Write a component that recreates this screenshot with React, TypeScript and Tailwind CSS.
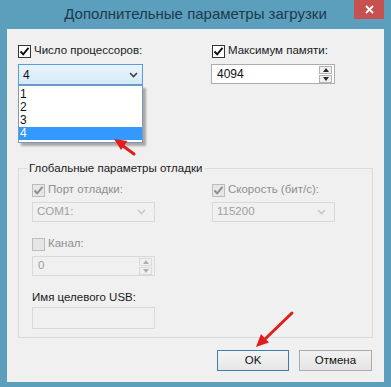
import React from "react";

const font = { fontFamily: '"Liberation Sans", Arial, sans-serif' };

function CheckBox({ checked, disabled }: { checked?: boolean; disabled?: boolean }) {
  return (
    <span
      className={
        "flex h-[13px] w-[13px] shrink-0 items-center justify-center border " +
        (disabled ? "border-[#bcbcbc] bg-[#e6e6e6]" : "border-[#333333] bg-white")
      }
    >
      {checked && (
        <svg width="11" height="11" viewBox="0 0 11 11">
          <path
            d="M1.5 5.5 L4.2 8.4 L9.5 1.8"
            fill="none"
            stroke={disabled ? "#8d8d8d" : "#111111"}
            strokeWidth="1.9"
          />
        </svg>
      )}
    </span>
  );
}

function CheckRow({ label, checked, disabled }: { label: string; checked?: boolean; disabled?: boolean }) {
  return (
    <div className="flex h-[14px] items-center gap-[3px]">
      <CheckBox checked={checked} disabled={disabled} />
      <span className={"text-[11.5px] leading-none " + (disabled ? "text-[#8f8f8f]" : "text-[#1a1a1a]")}>{label}</span>
    </div>
  );
}

function Chevron({ color }: { color: string }) {
  return (
    <svg width="9" height="6" viewBox="0 0 9 6">
      <path d="M1 1 L4.5 4.5 L8 1" fill="none" stroke={color} strokeWidth="1.6" />
    </svg>
  );
}

function SpinArrows({ disabled }: { disabled?: boolean }) {
  const c = disabled ? "#b0b0b0" : "#2a2a2a";
  const b = disabled ? "border-[#dadada]" : "border-[#b4b4b4]";
  return (
    <div className="mr-[2px] flex flex-col gap-px">
      <span className={"flex h-[8px] w-[13px] items-center justify-center border bg-[#f0f0f0] " + b}>
        <svg width="6" height="4" viewBox="0 0 6 4">
          <path d="M0 4 L3 0 L6 4 Z" fill={c} />
        </svg>
      </span>
      <span className={"flex h-[8px] w-[13px] items-center justify-center border bg-[#f0f0f0] " + b}>
        <svg width="6" height="4" viewBox="0 0 6 4">
          <path d="M0 0 L3 4 L6 0 Z" fill={c} />
        </svg>
      </span>
    </div>
  );
}

export default function App() {
  return (
    <div className="relative flex h-[387px] w-[391px] flex-col overflow-hidden bg-[#5b9fbd]" style={font}>
      {/* Title bar */}
      <div className="relative flex h-[29px] shrink-0 items-center justify-center">
        <span className="text-[15px] text-[#1c3a4a]">Дополнительные параметры загрузки</span>
        <div className="absolute right-[7px] top-0 flex h-[19px] w-[30px] items-center justify-center bg-[#c75050]">
          <svg width="9" height="9" viewBox="0 0 9 9">
            <path d="M1 1 L8 8 M8 1 L1 8" stroke="white" strokeWidth="1.8" />
          </svg>
        </div>
      </div>

      {/* Client area */}
      <div className="mx-[7px] flex h-[353px] flex-col bg-[#f0f0f0] px-[11px] pt-[15px]">
        <div className="flex">
          <div className="relative flex w-[193px] flex-col gap-[6px]">
            <CheckRow label="Число процессоров:" checked />
            <div className="flex h-[21px] w-[125px] items-center justify-between border border-[#569de5] bg-gradient-to-b from-[#eaf5fd] to-[#d3eaf9] pl-[4px] pr-[4px]">
              <span className="text-[12px] text-[#111]">4</span>
              <Chevron color="#404040" />
            </div>
            {/* open dropdown list */}
            <div className="absolute left-0 top-[41px] z-10 flex w-[125px] flex-col border border-[#7c9ab5] bg-white py-[2px] shadow-[3px_3px_2px_rgba(0,0,0,0.3)]">
              {["1", "2", "3", "4"].map((n) => (
                <div
                  key={n}
                  className={
                    "h-[13px] pl-[1px] text-[12px] leading-[13px] " +
                    (n === "4" ? "bg-[#3399ff] text-white" : "text-[#111]")
                  }
                >
                  {n}
                </div>
              ))}
            </div>
          </div>
          <div className="flex flex-col gap-[6px]">
            <div className="pl-[1px]">
              <CheckRow label="Максимум памяти:" checked />
            </div>
            <div className="flex h-[20px] w-[124px] items-center justify-between border border-[#abadb3] bg-white pl-[5px]">
              <span className="text-[12px] text-[#111]">4094</span>
              <SpinArrows />
            </div>
          </div>
        </div>

        {/* Group box */}
        <div className="relative mt-[83px] h-[170px] w-[355px] border border-[#dcdcdc] px-[13px] pt-[14px]">
          <span className="absolute -top-[9px] left-[8px] bg-[#f0f0f0] px-[2px] text-[11.5px] leading-[16px] text-[#1a1a1a]">
            Глобальные параметры отладки
          </span>
          <div className="flex">
            <div className="flex w-[180px] flex-col gap-[5px]">
              <CheckRow label="Порт отладки:" checked disabled />
              <div className="flex h-[20px] w-[123px] items-center justify-between border border-[#d9d9d9] pl-[4px] pr-[8px]">
                <span className="text-[11.5px] text-[#a0a0a0]">COM1:</span>
                <Chevron color="#c8c8c8" />
              </div>
            </div>
            <div className="flex flex-col gap-[5px]">
              <CheckRow label="Скорость (бит/с):" checked disabled />
              <div className="flex h-[20px] w-[123px] items-center justify-between border border-[#d9d9d9] pl-[4px] pr-[8px]">
                <span className="text-[11.5px] text-[#a0a0a0]">115200</span>
                <Chevron color="#c8c8c8" />
              </div>
            </div>
          </div>
          <div className="mt-[15px] flex flex-col gap-[5px]">
            <CheckRow label="Канал:" disabled />
            <div className="flex h-[20px] w-[123px] items-center justify-between border border-[#d9d9d9] pl-[5px]">
              <span className="text-[11.5px] text-[#a0a0a0]">0</span>
              <SpinArrows disabled />
            </div>
          </div>
          <div className="mt-[14px] text-[11.5px] leading-[14px] text-[#1a1a1a]">Имя целевого USB:</div>
          <div className="mt-[3px] h-[22px] w-[123px] border border-[#d9d9d9]" />
        </div>

        {/* Buttons */}
        <div className="mt-[12px] flex justify-end gap-[10px] pr-[1px]">
          <div className="flex h-[21px] w-[72px] items-center justify-center border border-[#3c7fb1] bg-gradient-to-b from-[#f4f4f4] to-[#e6e6e6] text-[11.5px] text-[#111]">
            OK
          </div>
          <div className="flex h-[21px] w-[73px] items-center justify-center border border-[#acacac] bg-gradient-to-b from-[#f2f2f2] to-[#e4e4e4] text-[11.5px] text-[#111]">
            Отмена
          </div>
        </div>
      </div>

      {/* Red annotation arrows */}
      <svg className="pointer-events-none absolute left-0 top-0 z-20" width="391" height="387" viewBox="0 0 391 387">
        <line x1="134" y1="154" x2="121" y2="144.5" stroke="#e01e1e" strokeWidth="3" strokeLinecap="round" />
        <polygon points="114,139 127.5,141 121,150" fill="#e01e1e" />
        <line x1="292" y1="313" x2="264" y2="340" stroke="#e01e1e" strokeWidth="3" strokeLinecap="round" />
        <polygon points="256,347 261,334 269,342.5" fill="#e01e1e" />
      </svg>
    </div>
  );
}
